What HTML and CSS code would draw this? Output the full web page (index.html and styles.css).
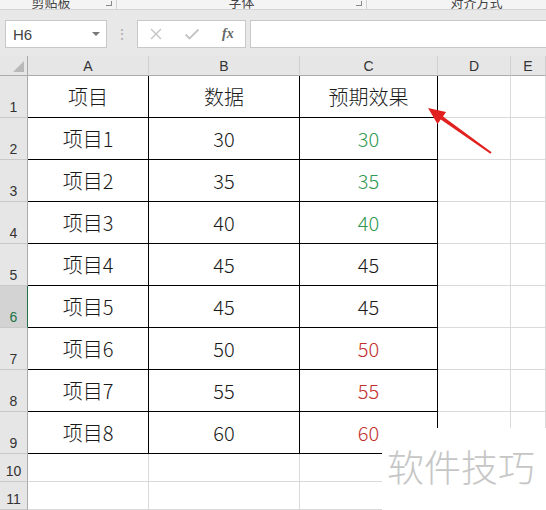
FILE: index.html
```html
<!DOCTYPE html>
<html>
<head>
<meta charset="utf-8">
<link rel="stylesheet" href="styles.css">
</head>
<body>
<div class="app">
  <div class="ribbon">
    <div class="rgroup g1"><span class="rlabel">剪贴板</span><span class="launch"></span></div>
    <div class="rgroup g2"><span class="rlabel">字体</span><span class="launch"></span></div>
    <div class="rgroup g3"><span class="rlabel">对齐方式</span></div>
  </div>
  <div class="fbar">
    <div class="namebox"><span class="nb-text">H6</span><span class="nb-arrow"></span></div>
    <div class="dots">⋮</div>
    <div class="fxbox">
      <svg class="ic-x" width="12" height="12" viewBox="0 0 12 12"><path d="M1 1L11 11M11 1L1 11" stroke="#c4c4c4" stroke-width="1.4" fill="none"/></svg>
      <svg class="ic-ok" width="16" height="12" viewBox="0 0 16 12"><path d="M1.5 6.5L5.5 10.5L14.5 1.5" stroke="#c4c4c4" stroke-width="1.8" fill="none"/></svg>
      <span class="fx">fx</span>
    </div>
    <div class="finput"></div>
  </div>
  <div class="sheet">
    <div class="corner"><span class="tri"></span></div>
    <div class="ch">A</div><div class="ch">B</div><div class="ch">C</div><div class="ch">D</div><div class="ch">E</div>

    <div class="rh">1</div><div class="c t">项目</div><div class="c t">数据</div><div class="c t">预期效果</div><div class="c"></div><div class="c"></div>
    <div class="rh">2</div><div class="c t">项目1</div><div class="c t">30</div><div class="c t green">30</div><div class="c"></div><div class="c"></div>
    <div class="rh">3</div><div class="c t">项目2</div><div class="c t">35</div><div class="c t green">35</div><div class="c"></div><div class="c"></div>
    <div class="rh">4</div><div class="c t">项目3</div><div class="c t">40</div><div class="c t green">40</div><div class="c"></div><div class="c"></div>
    <div class="rh">5</div><div class="c t">项目4</div><div class="c t">45</div><div class="c t">45</div><div class="c"></div><div class="c"></div>
    <div class="rh sel">6</div><div class="c t">项目5</div><div class="c t">45</div><div class="c t">45</div><div class="c"></div><div class="c"></div>
    <div class="rh">7</div><div class="c t">项目6</div><div class="c t">50</div><div class="c t red">50</div><div class="c"></div><div class="c"></div>
    <div class="rh">8</div><div class="c t">项目7</div><div class="c t">55</div><div class="c t red">55</div><div class="c"></div><div class="c"></div>
    <div class="rh">9</div><div class="c t">项目8</div><div class="c t">60</div><div class="c t red">60</div><div class="c"></div><div class="c"></div>
    <div class="rh">10</div><div class="c"></div><div class="c"></div><div class="c"></div><div class="c"></div><div class="c"></div>
    <div class="rh">11</div><div class="c"></div><div class="c"></div><div class="c"></div><div class="c"></div><div class="c"></div>
  </div>
  <svg class="arrow" width="546" height="510" viewBox="0 0 546 510">
    <polygon fill="#e1211f" points="428,108 446,112 443,116.4 491.6,152.2 490.4,153.8 440.8,119.4 437.5,124"/>
  </svg>
  <div class="watermark">软件技巧</div>
</div>
</body>
</html>
```
FILE: styles.css
```css
* { box-sizing: border-box; }
html, body { margin: 0; padding: 0; }
body {
  width: 546px;
  height: 510px;
  overflow: hidden;
  background: #fff;
  font-family: "Liberation Sans", "Noto Sans CJK SC", sans-serif;
}
.app { position: relative; width: 546px; height: 510px; }

.ribbon {
  display: flex;
  height: 10px;
  background: #f4f4f4;
  border-bottom: 1px solid #d4d4d4;
  overflow: hidden;
}
.rgroup {
  position: relative;
  display: flex;
  justify-content: center;
  height: 9px;
  overflow: hidden;
}
.g1 { width: 117px; border-right: 1px solid #d2d2d2; }
.g2 { width: 250px; border-right: 1px solid #d2d2d2; }
.g3 { flex: 1; }
.rlabel {
  font-family: "Noto Sans CJK SC", sans-serif;
  font-size: 13px;
  line-height: 13px;
  margin-top: -5px;
  color: #444;
}
.g1 .rlabel { margin-right: 14px; }
.g3 .rlabel { margin-left: 40px; }
.launch {
  position: absolute;
  right: 4px;
  top: 1px;
  width: 6px;
  height: 5px;
  border-right: 1px solid #888;
  border-bottom: 1px solid #888;
}

.fbar {
  display: flex;
  align-items: flex-start;
  height: 46px;
  padding-top: 10px;
  background: #e8e8e8;
}
.namebox {
  display: flex;
  align-items: center;
  justify-content: space-between;
  margin-left: 5px;
  width: 102px;
  height: 28px;
  background: #fff;
  border: 1px solid #c8c8c8;
  padding: 0 6px 0 7px;
}
.nb-text { font-size: 15px; color: #444; }
.nb-arrow {
  width: 0; height: 0;
  border-left: 4px solid transparent;
  border-right: 4px solid transparent;
  border-top: 4px solid #777;
}
.dots {
  width: 30px;
  text-align: center;
  color: #aaa;
  font-size: 14px;
  line-height: 28px;
}
.fxbox {
  display: flex;
  align-items: center;
  width: 109px;
  height: 28px;
  background: #fff;
  border: 1px solid #c8c8c8;
  padding-left: 12px;
}
.ic-x { margin-right: 22px; }
.ic-ok { margin-right: 22px; }
.fx {
  font-family: "Liberation Serif", serif;
  font-style: italic;
  font-weight: bold;
  font-size: 14px;
  color: #666;
}
.finput {
  flex: 1;
  margin-left: 4px;
  height: 28px;
  background: #fff;
  border: 1px solid #c8c8c8;
  border-right: none;
}

.sheet {
  display: grid;
  grid-template-columns: 28px 121px 151px 138px 73px 35px;
  grid-template-rows: 20px repeat(9, 42px) 28px 28px;
  background: #fff;
}
.corner {
  position: relative;
  background: #e6e6e6;
  border-right: 1px solid #ababab;
  border-bottom: 1px solid #ababab;
}
.tri {
  position: absolute;
  right: 3px;
  bottom: 3px;
  width: 0; height: 0;
  border-left: 11px solid transparent;
  border-bottom: 11px solid #b8b8b8;
}
.ch {
  background: #e6e6e6;
  border-right: 1px solid #d0d0d0;
  border-bottom: 1px solid #ababab;
  text-align: center;
  font-size: 14px;
  line-height: 20px;
  color: #333;
}
.rh {
  display: flex;
  align-items: flex-end;
  justify-content: center;
  padding-bottom: 2px;
  background: #e6e6e6;
  border-right: 1px solid #ababab;
  border-bottom: 1px solid #c9c9c9;
  font-size: 14px;
  color: #333;
}
.rh.sel {
  background: #d3d3d3;
  color: #217346;
  border-right: 1px solid #217346;
}
.c {
  border-right: 1px solid #dadada;
  border-bottom: 1px solid #dadada;
}
.c.t {
  display: flex;
  align-items: center;
  justify-content: center;
  border-right: 1px solid #000;
  border-bottom: 1px solid #000;
  font-family: "Noto Sans CJK SC", sans-serif;
  font-size: 20px;
  font-weight: 300;
  line-height: 1;
  color: #1a1a1a;
  padding-top: 1px;
}
.green { color: #2f9852 !important; }
.red { color: #c2302e !important; }

.arrow {
  position: absolute;
  left: 0;
  top: 0;
  pointer-events: none;
}
.watermark {
  position: absolute;
  left: 382px;
  top: 428px;
  width: 164px;
  height: 82px;
  background: #fff;
  padding: 18px 0 0 5px;
  font-family: "Noto Sans CJK SC", sans-serif;
  font-size: 37px;
  font-weight: 300;
  line-height: 40px;
  color: #c6c6c6;
  letter-spacing: 0;
}
```
